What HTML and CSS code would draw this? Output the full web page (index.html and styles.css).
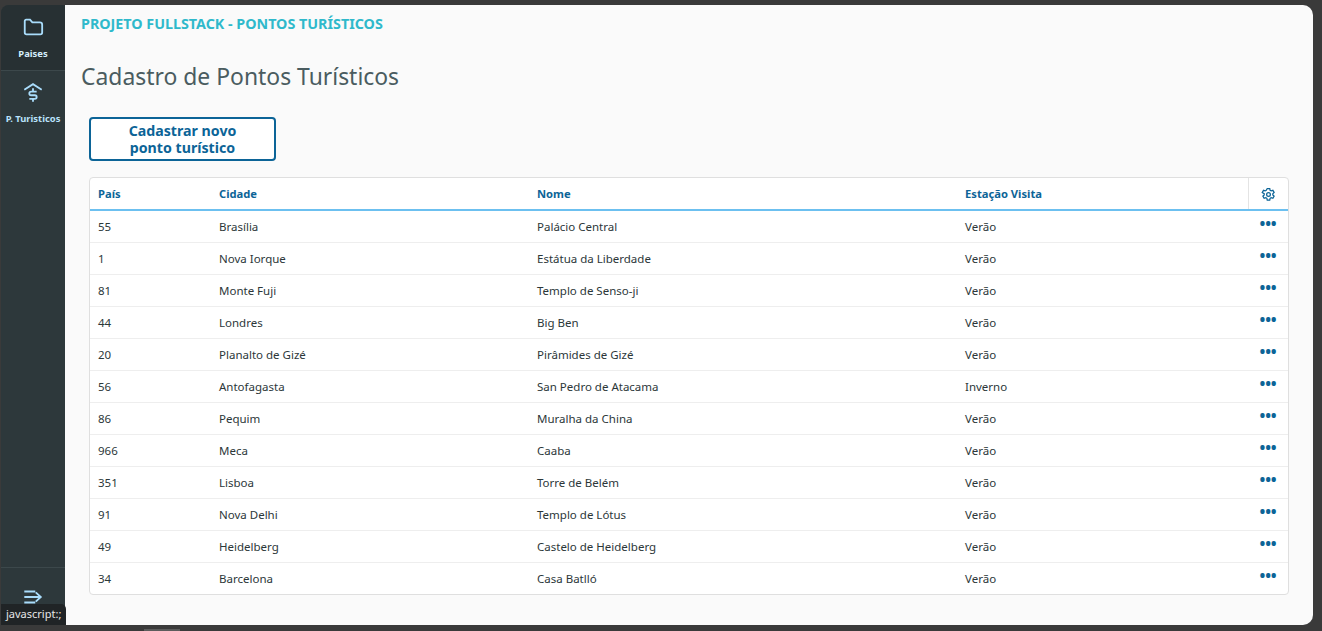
FILE: index.html
```html
<!DOCTYPE html>
<html lang="pt-BR">
<head>
  <meta charset="UTF-8" />
  <meta name="viewport" content="width=device-width, initial-scale=1.0"/>
  <title>Pontos Turísticos</title>
  <link rel="stylesheet" href="styles.css">
</head>
<body>
  <div class="app">
    <nav class="sidebar">
      <a class="nav-item active" href="#">
        <svg class="nav-icon" viewBox="0 0 24 24"><path d="M3 18V5.500A1.500 1.500 0 0 1 4.500 4h4.200l2.600 3h8.200A2.500 2.500 0 0 1 22 9.500V18a2 2 0 0 1-2 2H5a2 2 0 0 1-2-2z"/></svg>
        <span>Paises</span>
      </a>
      <a class="nav-item" href="#">
        <svg class="nav-icon" viewBox="0 0 24 24"><path d="M2.500 9.500 12 3.500l9.500 6M16 11.500h-6a1.900 1.900 0 0 0 0 4h4a1.900 1.900 0 0 1 0 4H8M12 8v3.500M12 19.500v3"/></svg>
        <span>P. Turisticos</span>
      </a>
      <div class="collapse">
        <svg class="nav-icon" viewBox="0 0 24 24"><path d="M2.500 6h12M2.500 12h18M2.500 18h12M15 7l5.500 5-5.500 5"/></svg>
      </div>
    </nav>

    <main class="content">
      <p class="app-title">PROJETO FULLSTACK - PONTOS TURÍSTICOS</p>
      <h1>Cadastro de Pontos Turísticos</h1>

      <button class="btn-new">Cadastrar novo<br>ponto turístico</button>

      <div class="table-box">
        <table>
          <colgroup>
            <col class="col-pais"><col class="col-cidade"><col class="col-nome"><col class="col-estacao"><col class="col-acoes">
          </colgroup>
          <thead>
            <tr>
              <th>País</th>
              <th>Cidade</th>
              <th>Nome</th>
              <th>Estação Visita</th>
              <th class="th-config">
                <svg class="gear" viewBox="0 0 24 24"><path d="M10 2.500h4l.6 2.800 1.700 1 2.700-.9 2 3.400-2.100 1.900v2l2.100 1.900-2 3.400-2.700-.9-1.700 1-.6 2.800h-4l-.6-2.800-1.700-1-2.700.9-2-3.400 2.100-1.900v-2L2 8.800l2-3.400 2.700.9 1.700-1z"/><circle cx="12" cy="12" r="3"/></svg>
              </th>
            </tr>
          </thead>
          <tbody>
            <tr><td>55</td><td>Brasília</td><td>Palácio Central</td><td>Verão</td><td class="more">•••</td></tr>
            <tr><td>1</td><td>Nova Iorque</td><td>Estátua da Liberdade</td><td>Verão</td><td class="more">•••</td></tr>
            <tr><td>81</td><td>Monte Fuji</td><td>Templo de Senso-ji</td><td>Verão</td><td class="more">•••</td></tr>
            <tr><td>44</td><td>Londres</td><td>Big Ben</td><td>Verão</td><td class="more">•••</td></tr>
            <tr><td>20</td><td>Planalto de Gizé</td><td>Pirâmides de Gizé</td><td>Verão</td><td class="more">•••</td></tr>
            <tr><td>56</td><td>Antofagasta</td><td>San Pedro de Atacama</td><td>Inverno</td><td class="more">•••</td></tr>
            <tr><td>86</td><td>Pequim</td><td>Muralha da China</td><td>Verão</td><td class="more">•••</td></tr>
            <tr><td>966</td><td>Meca</td><td>Caaba</td><td>Verão</td><td class="more">•••</td></tr>
            <tr><td>351</td><td>Lisboa</td><td>Torre de Belém</td><td>Verão</td><td class="more">•••</td></tr>
            <tr><td>91</td><td>Nova Delhi</td><td>Templo de Lótus</td><td>Verão</td><td class="more">•••</td></tr>
            <tr><td>49</td><td>Heidelberg</td><td>Castelo de Heidelberg</td><td>Verão</td><td class="more">•••</td></tr>
            <tr><td>34</td><td>Barcelona</td><td>Casa Batlló</td><td>Verão</td><td class="more">•••</td></tr>
          </tbody>
        </table>
      </div>
    </main>
  </div>

  <div class="status-tip">javascript:;</div>
  <div class="scroll-thumb"></div>
</body>
</html>
```

FILE: styles.css
```css
* {
  box-sizing: border-box;
  margin: 0;
  padding: 0;
}

html, body {
  height: 100%;
  overflow: hidden;
}

body {
  background: #3a3a3a;
  font-family: "Noto Sans", sans-serif;
  padding: 5px 9px 6px 1px;
}

.app {
  display: flex;
  height: 100%;
}

.sidebar {
  width: 64px;
  flex-shrink: 0;
  display: flex;
  flex-direction: column;
  background: #2d383b;
  border-radius: 8px 0 0 8px;
  overflow: hidden;
}

.nav-item {
  height: 65px;
  display: flex;
  flex-direction: column;
  align-items: center;
  padding-top: 10px;
  gap: 10px;
  color: #b9e2fb;
  font-size: 9.400px;
  font-weight: 700;
  line-height: 12px;
  text-decoration: none;
  white-space: nowrap;
}

.nav-item.active {
  height: 66px;
  padding-top: 11px;
  background: #273033;
  color: #d6eefc;
  border-bottom: 1px solid #3c484b;
}

.nav-icon {
  width: 22px;
  height: 22px;
  fill: none;
  stroke: #a9dcfb;
  stroke-width: 2;
  flex-shrink: 0;
}

.collapse {
  margin-top: auto;
  height: 58px;
  border-top: 1px solid #3c484b;
  display: flex;
  justify-content: center;
  padding-top: 18px;
}

.content {
  flex: 1;
  background: #fafafa;
  border-radius: 0 10px 10px 0;
  padding: 9px 24px 0 16px;
}

.app-title {
  font-size: 14.300px;
  font-weight: 700;
  line-height: 20px;
  color: #2fb9cb;
}

h1 {
  font-size: 22.900px;
  font-weight: 400;
  line-height: 32px;
  color: #4a5c60;
  margin-top: 27px;
}

.btn-new {
  display: block;
  width: 187px;
  height: 44px;
  margin: 24px 0 16px 8px;
  background: #fff;
  border: 2px solid #0c6497;
  border-radius: 4px;
  color: #0c6497;
  font-family: inherit;
  font-size: 14.200px;
  font-weight: 700;
  line-height: 17px;
}

.table-box {
  margin-left: 8px;
  background: #fff;
  border: 1px solid #dfdfdf;
  border-radius: 4px;
  overflow: hidden;
}

table {
  width: 100%;
  table-layout: fixed;
  border-collapse: collapse;
  font-size: 11.500px;
}

.col-pais { width: 121px; }
.col-cidade { width: 318px; }
.col-nome { width: 428px; }
.col-acoes { width: 40px; }

th {
  height: 32px;
  padding: 0 8px;
  text-align: left;
  color: #0c6497;
  font-size: 11.200px;
  font-weight: 700;
  border-bottom: 2px solid #6cc0f0;
}

.th-config {
  border-left: 1px solid #e4e4e4;
  text-align: center;
  padding: 0;
}

.gear {
  width: 15px;
  height: 15px;
  fill: none;
  stroke: #0c6497;
  stroke-width: 2;
  vertical-align: middle;
}

td {
  height: 32px;
  padding: 0 8px;
  color: #2c3739;
  border-bottom: 1px solid #eeeeee;
}

tbody tr:last-child td {
  border-bottom: none;
}

.more {
  color: #0c6497;
  font-size: 15.500px;
  font-weight: 700;
  line-height: 1;
  letter-spacing: -.2px;
  text-align: center;
  padding: 0 0 5px;
}

/* browser status bubble over the sidebar corner */
.status-tip {
  position: absolute;
  left: 1px;
  bottom: 6px;
  height: 21px;
  padding: 0 5px;
  background: #202426;
  color: #e6e6e6;
  font-size: 11px;
  line-height: 20px;
  border-radius: 0 5px 0 0;
}

.scroll-thumb {
  position: absolute;
  left: 144px;
  bottom: 0;
  width: 36px;
  height: 2px;
  background: #5c5c5c;
}
```
